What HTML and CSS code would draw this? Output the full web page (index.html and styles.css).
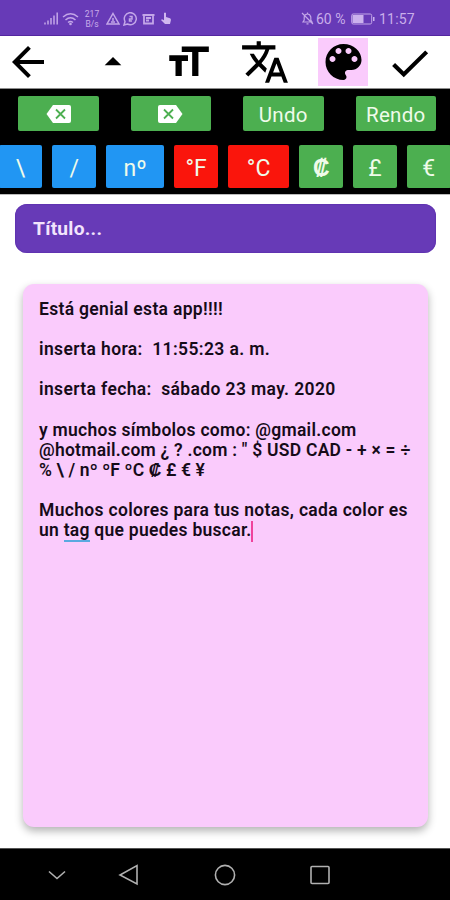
FILE: index.html
```html
<!DOCTYPE html>
<html lang="es">
<head>
<meta charset="utf-8">
<title>Notas</title>
<link rel="stylesheet" href="styles.css">
</head>
<body>
<header class="status">
  <svg class="signal" width="15" height="13" viewBox="0 0 15 13"><path d="M1 12.500v-2M4 12.500V8.500M7 12.500V6M10 12.500V3.500M13.200 12.500V.5"/></svg>
  <svg class="wifi" width="17" height="14" viewBox="0 0 17 14"><path d="M1 5q7.500-6.500 15 0M3.500 8q5-4.500 10 0M6 10.500q2.500-2 5 0"/><circle cx="8.500" cy="12" r="1.300"/></svg>
  <div class="speed"><span>217</span><span>B/s</span></div>
  <svg class="alert" width="14" height="13" viewBox="0 0 14 13"><path d="M7 1.500 13 12H1ZM7 6v3M5 10h4"/></svg>
  <svg class="chat" width="15" height="14" viewBox="0 0 15 14"><path d="M1 13l1-3.500A6 6 0 1 1 4.500 12ZM6.500 4.500h2.500v2.500H6.500v2h2.500"/></svg>
  <svg class="news" width="13" height="12" viewBox="0 0 13 12"><path d="M.5 2h12M2 1v9.500h9V1M4 5h5M4 7.500h3"/></svg>
  <svg class="touch" width="12" height="13" viewBox="0 0 12 13"><path d="M4 1q1-1 2 0v4l4 1.200q1.200.5.900 2L10 12H5L1 8l1-.8 2 1Z"/></svg>
  <span class="space"></span>
  <svg class="bell" width="13" height="13" viewBox="0 0 13 13"><path d="M2 10h9L9.800 8V5Q9 2 6.500 2T3.200 5v3ZM5.500 11.800h2M1 1l11 11M6.500 2V.5"/></svg>
  <span class="percent">60 %</span>
  <svg class="battery" width="24" height="12" viewBox="0 0 24 12"><rect class="shell" x=".7" y="1" width="20" height="10" rx="1.500"/><path class="tip" d="M22 4h1.500v4H22z"/><path class="charge" d="M1.500 2h11v8h-11z"/></svg>
  <span class="clock">11:57</span>
</header>
<nav class="tools">
  <span class="tool tool-back"><svg viewBox="0 0 24 24"><path d="M20 11H7.830l5.590-5.590L12 4l-8 8 8 8 1.410-1.410L7.830 13H20v-2z"/></svg></span>
  <span class="tool tool-small"><svg viewBox="0 0 24 24"><path d="M7 14l5-5 5 5z"/></svg></span>
  <span class="tool"><svg viewBox="0 0 24 24"><path d="M9 4.500v2.700h5v11.500h3V7.200h5V4.500H9zm-6 7h3v7.200h3v-7.200h3V8.800H3v2.700z"/></svg></span>
  <span class="tool tool-translate"><svg viewBox="0 0 24 24"><path d="M12.870 15.070l-2.540-2.510.03-.03c1.740-1.940 2.980-4.170 3.710-6.530H17V4h-7V2H8v2H1v1.990h11.170C11.500 7.920 10.440 9.750 9 11.350 8.070 10.320 7.300 9.190 6.690 8h-2c.73 1.630 1.730 3.170 2.980 4.560l-5.090 5.020L4 19l5-5 3.110 3.110.76-2.040zM18.500 10h-2L12 22h2l1.120-3h4.750L21 22h2l-4.500-12zm-2.620 7l1.620-4.330L19.120 17h-3.240z"/></svg></span>
  <span class="tool tool-active"><svg viewBox="0 0 24 24"><path d="M12 3c-4.970 0-9 4.030-9 9s4.030 9 9 9c.83 0 1.500-.67 1.500-1.500 0-.39-.15-.74-.39-1.010-.23-.26-.38-.61-.38-.99 0-.83.67-1.500 1.500-1.500H16c2.760 0 5-2.240 5-5 0-4.420-4.030-8-9-8zm-5.500 9c-.83 0-1.500-.67-1.500-1.500S5.670 9 6.500 9 8 9.670 8 10.500 7.330 12 6.500 12zm3-4C8.670 8 8 7.330 8 6.500S8.670 5 9.500 5s1.500.67 1.500 1.500S10.330 8 9.500 8zm5 0c-.83 0-1.500-.67-1.500-1.500S13.670 5 14.500 5s1.500.67 1.500 1.500S15.330 8 14.500 8zm3 4c-.83 0-1.500-.67-1.500-1.500S16.670 9 17.500 9s1.500.67 1.500 1.500-.67 1.500-1.500 1.500z"/></svg></span>
  <span class="tool tool-check"><svg viewBox="0 0 24 24"><path d="M9 16.600L4.830 12.500l-1.420 1.410L9 19.300 20.700 7.800l-1.410-1.300z"/></svg></span>
</nav>
<section class="keys">
  <div class="actions">
    <button class="key"><svg width="25" height="18" viewBox="0 0 25 18"><path class="tag" d="M7 0h16q2 0 2 2v14q0 2-2 2H7L.5 9Z"/><path class="cross" d="m10 4.500 9 9m0-9-9 9"/></svg></button>
    <button class="key"><svg width="25" height="18" viewBox="0 0 25 18"><path class="tag" d="M18 0H2Q0 0 0 2v14q0 2 2 2h16l6.500-9Z"/><path class="cross" d="m6 4.500 9 9m0-9-9 9"/></svg></button>
    <button class="key">Undo</button>
    <button class="key">Rendo</button>
  </div>
  <div class="symbols">
    <button class="key blue">\</button>
    <button class="key blue">/</button>
    <button class="key blue wide">nº</button>
    <button class="key red">°F</button>
    <button class="key red wider">°C</button>
    <button class="key colon">₡</button>
    <button class="key">£</button>
    <button class="key">€</button>
  </div>
</section>
<main class="page">
  <div class="title">Título...</div>
  <article class="note">
    <p>Está genial esta app!!!!</p>
    <p class="stamp">inserta hora:&nbsp; 11:55:23 a. m.</p>
    <p class="stamp">inserta fecha:&nbsp; sábado 23 may. 2020</p>
    <p><span class="mail">y muchos símbolos como: @gmail.com</span><br><span class="signs">@hotmail.com ¿ ? .com : " $ USD CAD - + × = ÷</span><br><span class="units">% \ / nº ºF ºC ₡ £ € ¥</span></p>
    <p>Muchos colores para tus notas, cada color es<br><span class="mail">un <span class="typo">tag</span> que puedes buscar.</span><span class="caret"></span></p>
  </article>
</main>
<footer class="navbar">
  <svg viewBox="0 0 24 24"><path d="m4 8.500 8 7 8-7"/></svg>
  <svg viewBox="0 0 24 24"><path d="M20 2.500v18.500L3 12Z"/></svg>
  <svg viewBox="0 0 24 24"><circle cx="12" cy="12" r="9.600"/></svg>
  <svg viewBox="0 0 24 24"><rect x="3" y="3.500" width="18" height="17" rx="1"/></svg>
</footer>
</body>
</html>
```
FILE: styles.css
```css
* { box-sizing: border-box; }
body {
  margin: 0;
  width: 450px;
  height: 900px;
  display: flex;
  flex-direction: column;
  overflow: hidden;
  background: #fff;
  font-family: Roboto, "Liberation Sans", sans-serif;
}
svg { display: block; flex: none; }

.status {
  height: 36px;
  flex: none;
  display: flex;
  align-items: center;
  padding: 2px 34px 0 44px;
  background: #673ab7;
  border-bottom: 1px solid #5426a0;
  color: #c9aeea;
}
.status svg { fill: none; stroke: #c3a6e8; stroke-width: 1.5; }
.wifi { margin-left: 3px; }
.wifi circle { fill: #c3a6e8; stroke: none; }
.speed {
  display: flex;
  flex-direction: column;
  width: 16px;
  margin-left: 5px;
  font-size: 8.5px;
  line-height: 10px;
  text-align: center;
}
.alert { margin-left: 6px; }
.chat { margin-left: 3px; }
.news { margin-left: 4px; }
.status .news { stroke-width: 1.8; }
.touch { margin-left: 5px; }
.status .touch { fill: #d0b7ef; stroke: none; }
.space { flex: 1; }
.status .bell { stroke-width: 1.2; }
.percent { font-size: 14px; margin-left: 2px; width: 32px; white-space: nowrap; }
.battery { margin-left: 3px; }
.status .battery .shell { stroke-width: 1; }
.status .battery .tip, .status .battery .charge { fill: #cbb1ed; stroke: none; }
.clock { font-size: 14px; letter-spacing: .2px; margin-left: 4px; width: 37px; }

.tools {
  height: 53px;
  flex: none;
  display: flex;
  padding-left: 3px;
  align-items: center;
  border-bottom: 1px solid #8d8d8d;
}
.tool { width: 50px; height: 48px; flex: none; display: flex; align-items: center; justify-content: center; }
.tool svg { width: 50px; height: 50px; fill: #000; }
.tool-back svg { width: 48px; height: 48px; }
.tool-small { width: 36px; margin: 0 32px 0 42px; }
.tool-small svg { width: 40px; height: 40px; }
.tool-translate { margin: 0 28px 0 27px; }
.tool-active { background: #facbfc; }
.tool-active svg { width: 49px; height: 48px; }
.tool-check { margin-left: 17px; }

.keys {
  height: 106px;
  flex: none;
  padding-top: 7px;
  background: #000;
  border-bottom: 1px solid #bbb;
  overflow: hidden;
}
.actions { display: flex; justify-content: space-between; height: 35px; padding: 0 14px 0 18px; }
.symbols { display: flex; gap: 10px; height: 43px; margin: 14px 0 0 -1.4px; }
.key {
  width: 44px;
  flex: none;
  display: flex;
  align-items: center;
  justify-content: center;
  padding: 3px 0 0;
  border: 0;
  border-radius: 2px;
  background: #4caf50;
  color: #effbea;
  font: 400 23px/1 Roboto, "Liberation Sans", sans-serif;
}
.symbols .key { width: 43.8px; }
.actions .key { width: 80.5px; font-size: 20.5px; letter-spacing: .3px; padding-top: 4px; }
.actions .key:has(svg) { padding-top: 0; }
.key .tag { fill: #fff; }
.key .cross { stroke: #4caf50; stroke-width: 1.8; fill: none; }
.key.colon { font-weight: 600; }
.blue { background: #2196f3; }
.red { background: #fa150c; }
.symbols .wide { width: 58px; }
.symbols .wider { width: 61.3px; }

.page { flex: 1; padding: 9px 14px 0 15px; }
.title {
  height: 49px;
  padding-left: 18px;
  border-radius: 12px;
  background: #673ab7;
  box-shadow: inset 0 0 1px .5px #5a2cab;
  color: #f2e4fc;
  font-size: 19.2px;
  letter-spacing: .25px;
  font-weight: 700;
  line-height: 50px;
}
.note {
  height: 543px;
  margin: 31px 8px 0 8px;
  padding: 15px 0 0 16px;
  border-radius: 11px;
  background: #facbfc;
  box-shadow: 0 4px 9px rgba(0, 0, 0, .3);
  color: #160b19;
  font-size: 17.5px;
  font-weight: 600;
  letter-spacing: .32px;
  line-height: 20.1px;
  white-space: nowrap;
}
.note p { margin: 0 0 20.1px; }
.note .stamp { letter-spacing: .37px; }
.mail { letter-spacing: .27px; }
.signs { letter-spacing: .24px; }
.units { letter-spacing: .13px; }
.typo { border-bottom: 2px solid #5aa9e0; }
.caret { display: inline-block; width: 2px; height: 21px; margin-bottom: -1px; background: #f0429c; vertical-align: -5px; }

.navbar {
  height: 52px;
  flex: none;
  display: flex;
  align-items: center;
  background: #000;
  border-top: 1px solid #555;
  padding-left: 45px;
}
.navbar svg { width: 24px; height: 24px; fill: none; stroke: #b0b0b0; stroke-width: 1.6; }
.navbar svg:nth-child(2) { margin-left: 48px; }
.navbar svg:nth-child(3) { margin-left: 72px; }
.navbar svg:nth-child(4) { margin-left: 71px; }
```
